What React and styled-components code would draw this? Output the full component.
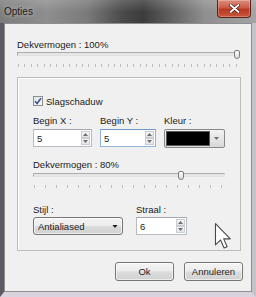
import React from "react";
import styled, { createGlobalStyle } from "styled-components";

const GlobalStyle = createGlobalStyle`
  html, body { margin: 0; padding: 0; background: #ffffff; }
  body { font-family: "Liberation Sans", Arial, sans-serif; }
  #root { width: 256px; height: 297px; }
  * { box-sizing: border-box; }
`;

const Window = styled.div`
  position: relative;
  width: 256px;
  height: 297px;
  display: flex;
  flex-direction: column;
  overflow: hidden;
  font-family: "Liberation Sans", Arial, sans-serif;
  font-size: 9.5px;
  color: #1b1b1b;
`;

const TitleBar = styled.div`
  height: 23px;
  flex: none;
  display: flex;
  align-items: flex-start;
  background:
    linear-gradient(180deg, rgba(255,255,255,0.16) 0px, rgba(255,255,255,0) 12px),
    linear-gradient(90deg, #7c7c7c 0%, #8e8e8e 18%, #7a7a7a 34%, #4a4a4a 48%, #3c3c3c 56%, #5e5e5e 66%, #8f8f8f 80%, #a4a4a4 100%);
`;

const Title = styled.div`
  padding: 6px 0 0 4px;
  font-size: 10px;
  line-height: 12px;
  color: #1a1a1a;
  text-shadow: 0 0 5px rgba(255,255,255,0.7);
`;

const CloseButton = styled.div`
  margin-left: auto;
  margin-right: 5px;
  width: 34px;
  height: 18px;
  display: flex;
  align-items: center;
  justify-content: center;
  border: 1px solid #5c2017;
  border-top: none;
  border-radius: 0 0 4px 4px;
  background: linear-gradient(180deg, #dc8f80 0%, #cc5a45 45%, #b83822 55%, #c9563d 100%);
  box-shadow: inset 0 0 0 1px rgba(255,255,255,0.25);
`;

const Frame = styled.div`
  flex: 1;
  display: flex;
  border-left: 4px solid #5d5a63;
  border-right: 5px solid #c4c3c8;
  border-bottom: 5px solid #dad4de;
`;

const Client = styled.div`
  flex: 1;
  display: flex;
  flex-direction: column;
  background: #f0f0f0;
  border: 1px solid #8e8e92;
  padding: 15px 10px 0 12px;
`;

const Label = styled.div`
  height: 11px;
  line-height: 11px;
  white-space: nowrap;
  margin-top: ${(p) => p.$mt || 0}px;
`;

const SliderBox = styled.div`
  position: relative;
  width: ${(p) => p.$w}px;
  height: 17px;
  flex: none;
  margin-top: ${(p) => p.$mt || 0}px;
`;

const Track = styled.div`
  position: absolute;
  left: 0;
  right: 0;
  top: 2px;
  height: 4px;
  border: 1px solid #acacac;
  border-bottom-color: #e2e2e2;
  border-right-color: #e2e2e2;
  background: #e6e6e6;
`;

const Thumb = styled.div`
  position: absolute;
  top: 0;
  left: ${(p) => p.$x}px;
  width: 6px;
  height: 9px;
  border: 1px solid #7b7b7b;
  border-radius: 2px 2px 3px 3px;
  background: linear-gradient(180deg, #fbfbfb, #dedede);
`;

const Ticks = styled.div`
  position: absolute;
  left: 1px;
  right: 0;
  top: 14px;
  height: 3px;
  background: repeating-linear-gradient(90deg, #bcbcbc 0 1px, transparent 1px ${(p) => p.$step}px);
`;

const Slider = ({ width, pos, step, mt }) => (
  <SliderBox $w={width} $mt={mt}>
    <Track />
    <Ticks $step={step} />
    <Thumb $x={pos} />
  </SliderBox>
);

const GroupBox = styled.div`
  width: 224px;
  height: 174px;
  margin-top: 10px;
  flex: none;
  border: 1px solid #bcbcbc;
  box-shadow: inset 1px 1px 0 #ffffff;
  padding: 18px 0 0 15px;
  display: flex;
  flex-direction: column;
`;

const CheckRow = styled.div`
  display: flex;
  align-items: center;
  gap: 3px;
  height: 10px;
`;

const CheckBoxMark = styled.div`
  width: 10px;
  height: 10px;
  border: 1px solid #8e8f8f;
  background: linear-gradient(135deg, #dfe3e8, #f6f7f8);
  display: flex;
  align-items: center;
  justify-content: center;
`;

const FieldGrid = styled.div`
  display: grid;
  grid-template-columns: ${(p) => p.$cols};
  column-gap: ${(p) => p.$gap}px;
  margin-top: ${(p) => p.$mt}px;
`;

const Field = styled.div`
  display: flex;
  flex-direction: column;
  gap: ${(p) => p.$gap}px;
`;

const SpinInput = styled.div`
  position: relative;
  height: 18px;
  display: flex;
  align-items: center;
  background: #ffffff;
  border: 1px solid ${(p) => (p.$focus ? "#8fb3d9" : "#b7bcc4")};
  border-top-color: ${(p) => (p.$focus ? "#6f98c8" : "#a2a7b0")};
  padding: 0 12px 0 3px;
  line-height: 11px;
`;

const SpinButtons = styled.div`
  position: absolute;
  right: 1px;
  top: 1px;
  bottom: 1px;
  width: 9px;
  display: flex;
  flex-direction: column;
`;

const SpinButton = styled.div`
  flex: 1;
  display: flex;
  align-items: center;
  justify-content: center;
  border: 1px solid #c9ccd0;
  background: linear-gradient(180deg, #f7f7f7, #e2e4e6);
`;

const Arrow = ({ up, color = "#6d6d6d", w = 5, h = 3 }) => (
  <svg width={w} height={h} viewBox="0 0 5 3">
    <path d={up ? "M0 3 L2.5 0 L5 3 Z" : "M0 0 L5 0 L2.5 3 Z"} fill={color} />
  </svg>
);

const Spin = ({ value, focus }) => (
  <SpinInput $focus={focus}>
    {value}
    <SpinButtons>
      <SpinButton>
        <Arrow up />
      </SpinButton>
      <SpinButton>
        <Arrow />
      </SpinButton>
    </SpinButtons>
  </SpinInput>
);

const ColorCombo = styled.div`
  height: 19px;
  display: flex;
  align-items: stretch;
  border: 1px solid #8a8a8a;
  border-radius: 2px;
  background: linear-gradient(180deg, #f2f2f2, #d9d9d9);
  padding: 1px;
`;

const Swatch = styled.div`
  width: 44px;
  background: #000000;
  border: 1px solid #5a5a5a;
`;

const DropZone = styled.div`
  flex: 1;
  display: flex;
  align-items: center;
  justify-content: center;
`;

const Combo = styled.div`
  height: 18px;
  display: flex;
  align-items: center;
  justify-content: space-between;
  border: 1px solid #767676;
  border-radius: 3px;
  background: linear-gradient(180deg, #f4f4f4 0%, #ececec 48%, #dcdcdc 52%, #d0d0d0 100%);
  box-shadow: inset 0 0 0 1px rgba(255,255,255,0.6);
  padding: 0 4px 0 4px;
  line-height: 11px;
`;

const ButtonRow = styled.div`
  display: flex;
  justify-content: flex-end;
  gap: 10px;
  margin-top: 11px;
  margin-right: -2px;
`;

const Button = styled.div`
  width: 59px;
  height: 19px;
  display: flex;
  align-items: center;
  justify-content: center;
  border: 1px solid #767676;
  border-radius: 3px;
  background: linear-gradient(180deg, #f4f4f4 0%, #ececec 48%, #dcdcdc 52%, #d2d2d2 100%);
  box-shadow: inset 0 0 0 1px rgba(255,255,255,0.6);
  color: #1e1e1e;
  line-height: 11px;
`;

const Cursor = styled.svg`
  position: absolute;
  left: 214px;
  top: 223px;
`;

export default function App() {
  return (
    <>
      <GlobalStyle />
      <Window>
        <TitleBar>
          <Title>Opties</Title>
          <CloseButton>
            <svg width="11" height="9" viewBox="0 0 11 9">
              <path d="M1.5 1 L9.5 8 M9.5 1 L1.5 8" stroke="#4a1a12" strokeWidth="3.2" strokeLinecap="round" />
              <path d="M1.5 1 L9.5 8 M9.5 1 L1.5 8" stroke="#ffffff" strokeWidth="1.8" strokeLinecap="round" />
            </svg>
          </CloseButton>
        </TitleBar>
        <Frame>
          <Client>
            <Label>Dekvermogen : 100%</Label>
            <Slider width={223} pos={217} step={6.4} />
            <GroupBox>
              <CheckRow>
                <CheckBoxMark>
                  <svg width="8" height="8" viewBox="0 0 8 8">
                    <path d="M1 4.2 L3.1 6.5 L7 1.2" stroke="#3d5590" strokeWidth="1.6" fill="none" />
                  </svg>
                </CheckBoxMark>
                <span>Slagschaduw</span>
              </CheckRow>
              <FieldGrid $cols="59px 56px 61px" $gap={8} $mt={9}>
                <Field $gap={3}>
                  <Label>Begin X :</Label>
                  <Spin value="5" />
                </Field>
                <Field $gap={3}>
                  <Label>Begin Y :</Label>
                  <Spin value="5" focus />
                </Field>
                <Field $gap={3}>
                  <Label>Kleur :</Label>
                  <ColorCombo>
                    <Swatch />
                    <DropZone>
                      <Arrow color="#707070" />
                    </DropZone>
                  </ColorCombo>
                </Field>
              </FieldGrid>
              <Label $mt={11}>Dekvermogen : 80%</Label>
              <Slider width={192} pos={145} step={11} mt={1} />
              <FieldGrid $cols="90px 51px" $gap={13} $mt={16}>
                <Field $gap={2}>
                  <Label>Stijl :</Label>
                  <Combo>
                    <span>Antialiased</span>
                    <Arrow color="#1a1a1a" w={6} h={3} />
                  </Combo>
                </Field>
                <Field $gap={2}>
                  <Label>Straal :</Label>
                  <Spin value="6" />
                </Field>
              </FieldGrid>
            </GroupBox>
            <ButtonRow>
              <Button>Ok</Button>
              <Button>Annuleren</Button>
            </ButtonRow>
          </Client>
        </Frame>
        <Cursor width="18" height="26" viewBox="0 0 12 19">
          <path
            d="M0.5 0.5 L0.5 16 L4.2 12.4 L6.8 18.3 L9 17.3 L6.5 11.6 L11.3 11.6 Z"
            fill="#ffffff"
            stroke="#4a4a4a"
            strokeWidth="0.8"
            strokeLinejoin="round"
          />
        </Cursor>
      </Window>
    </>
  );
}
